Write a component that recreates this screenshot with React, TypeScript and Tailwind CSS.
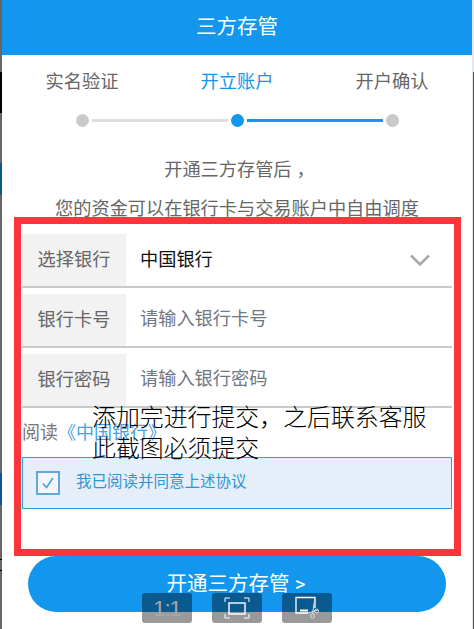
import React from 'react';

const cjk = 'font-["Roboto","Noto_Sans_CJK_SC",sans-serif]';

function BankRow({ label, children }: { label: string; children: React.ReactNode }) {
    return (
        <div className="mt-[6px] flex h-[54px] border-b-2 border-[#c9c9c9]">
            <div className="flex h-[52px] w-[104px] items-center justify-center bg-[#f2f2f2] text-[18.2px] text-[#666]">{label}</div>
            <div className="flex flex-1 items-center pl-[14px] pr-[22px] text-[18.2px]">{children}</div>
        </div>
    );
}

function LeftEdge() {
    return (
        <div className="flex w-[2px] shrink-0 flex-col bg-[#666]">
            <div className="mt-[72px] h-[41px] bg-black" />
            <div className="mt-[50px] h-[32px] bg-[#0a5a8e]" />
            <div className="mt-[278px] h-[32px] bg-[#0a5a8e]" />
            <div className="mt-[54px] h-px bg-black" />
            <div className="mt-[10px] h-px bg-black" />
        </div>
    );
}

export default function App() {
    return (
        <div className={`relative flex h-[629px] w-[474px] overflow-hidden bg-white ${cjk}`}>
            <LeftEdge />
            <main className="w-[470px] shrink-0">
                <header className="flex h-[55px] items-center justify-center bg-[#1296ee] text-[20.5px] text-white">三方存管</header>

                <div className="mt-[14px] grid h-[26px] grid-cols-[155px_155px_155px] justify-center text-center text-[18.3px] leading-[26px] text-[#666]">
                    <span>实名验证</span>
                    <span className="text-[#1296ee]">开立账户</span>
                    <span>开户确认</span>
                </div>
                <div className="mt-[19px] flex h-[13px] items-center justify-center">
                    <span className="h-[13px] w-[13px] rounded-full bg-[#c9c9c9]" />
                    <span className="mx-[3px] h-[3px] w-[136px] bg-[#ddd]" />
                    <span className="h-[13px] w-[13px] rounded-full bg-[#1296ee]" />
                    <span className="mx-[3px] h-[3px] w-[136px] bg-[#1296ee]" />
                    <span className="h-[13px] w-[13px] rounded-full bg-[#c9c9c9]" />
                </div>

                <div className="mt-[23px] text-center text-[18.2px] leading-[39px] text-[#666]">
                    <p>开通三方存管后<span className="-mr-[5px] inline-block pl-[5px]">，</span></p>
                    <p>您的资金可以在银行卡与交易账户中自由调度</p>
                </div>

                <section className="mx-5">
                    <BankRow label="选择银行">
                        <span className="flex-1 text-[#111]">中国银行</span>
                        <svg width="20" height="12" viewBox="0 0 20 12" fill="none" stroke="#a9a9a9" strokeWidth="2.5">
                            <path d="M1 1.5 L10 10.5 L19 1.5" />
                        </svg>
                    </BankRow>
                    <BankRow label="银行卡号">
                        <span className="pb-[3px] text-[#6f7785]">请输入银行卡号</span>
                    </BankRow>
                    <BankRow label="银行密码">
                        <span className="pb-[3px] text-[#6f7785]">请输入银行密码</span>
                    </BankRow>

                    <p className="mt-3 h-[26px] text-[18px] leading-[26px] text-[#777]">
                        阅读<span className="text-[#4a9fdc]">《中国银行》</span>
                    </p>

                    <div className="mt-[11px] flex h-[52px] items-center border-[1.5px] border-[#2ea0d8] bg-[#e6eef9] pl-[13px]">
                        <span className="flex h-[24px] w-[24px] items-center justify-center border-2 border-[#62a8dc] bg-[#f3f7fd]">
                            <svg width="14" height="14" viewBox="0 0 14 14" fill="none" stroke="#3f9fe0" strokeWidth="1.5">
                                <path d="M2 7.5 L5.5 11.5 L12 2" />
                            </svg>
                        </span>
                        <span className="ml-[16px] text-[15.5px] text-[#2f96d2]">我已阅读并同意上述协议</span>
                    </div>
                </section>

                <button className="mx-[26px] mt-[47px] flex h-[56px] w-[418px] items-center justify-center rounded-full bg-[#1296ee] pr-[2px] text-[20.5px] text-white">
                    开通三方存管 &gt;
                </button>
            </main>
            <div className="w-[2px] shrink-0 bg-[#e4e8ea] pl-px">
                <div className="mt-[72px] h-[557px] w-px bg-[#555]" />
            </div>

            {/* red marker frame and note pasted on top of the screenshot */}
            <div className="absolute left-[14px] top-[217px] h-[339px] w-[447px] border-[7px] border-[#fb3539]" />
            <div className="absolute left-[92px] top-[403px] text-[23.9px] font-light leading-[31px] whitespace-nowrap text-black">
                <p>添加完进行提交，之后联系客服</p>
                <p>此截图必须提交</p>
            </div>

            {/* viewer toolbar */}
            <div className="absolute left-[142px] top-[593px] flex gap-5">
                <div className="flex h-[30px] w-[50px] items-center justify-center rounded-[3px] bg-black/40 font-['Liberation_Sans',sans-serif] text-[22px] tracking-[-1px] text-[#a8a8a8]">1:1</div>
                <div className="flex h-[30px] w-[50px] items-center justify-center rounded-[3px] bg-black/40">
                    <svg width="26" height="22" viewBox="0 0 26 22" fill="none" stroke="white" strokeWidth="1">
                        <path d="M1 5 V1 H6 M20 1 H25 V5 M1 17 V21 H6 M20 21 H25 V17" />
                        <rect x="5" y="6" width="16" height="11" strokeWidth="1.4" />
                    </svg>
                </div>
                <div className="flex h-[30px] w-[50px] items-center justify-center rounded-[3px] bg-black/40">
                    <svg width="50" height="30" viewBox="0 0 50 30" fill="none" stroke="white" strokeWidth="1">
                        <path d="M33 15 V4.5 H14 V20 H26" strokeWidth="1.3" />
                        <path d="M18 17.5 H26" strokeWidth="2" />
                        <path d="M33 4 L30.5 21 M36 17 L26 20" stroke="#ddd" />
                        <circle cx="34.5" cy="18" r="2" stroke="#ddd" />
                        <circle cx="30.5" cy="23" r="2" stroke="#ddd" />
                    </svg>
                </div>
            </div>
        </div>
    );
}
